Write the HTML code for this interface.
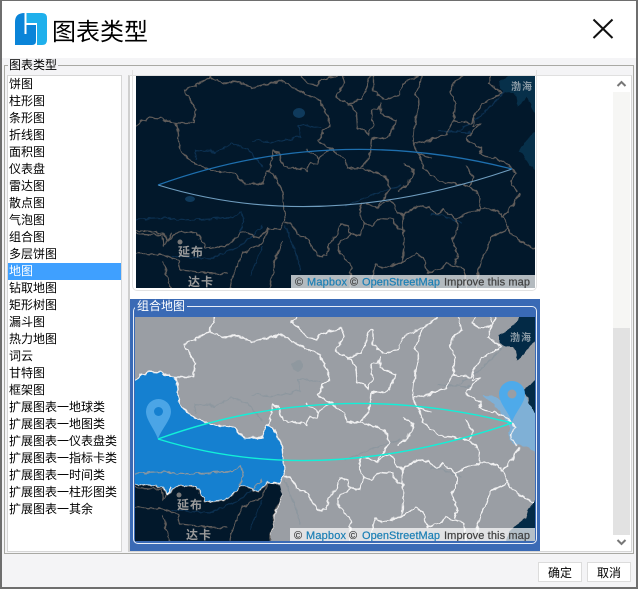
<!DOCTYPE html>
<html><head><meta charset="utf-8"><style>
*{box-sizing:border-box}
html,body{margin:0;padding:0;width:638px;height:589px;overflow:hidden;background:#f4f4f6}
body{position:relative;font-family:"WenQuanYi Zen Hei","Noto Sans CJK SC",sans-serif;font-size:12px;color:#000}
.a{position:absolute}
#frame{left:0;top:0;width:638px;height:589px;border:2px solid #6e6e6e;border-top-width:1px;z-index:9;pointer-events:none}
#head{left:0;top:0;width:638px;height:58px;background:#fff}
#title{left:52px;top:12px;font:24px/36px "Noto Sans CJK SC",sans-serif;color:#000}
#fs{left:4px;top:65px;width:630px;height:489px;border:1px solid #a9a9a4}
#lg{left:8px;top:58px;height:14px;line-height:14px;padding:0 1px;background:#f4f4f6;white-space:nowrap}
#list{left:7px;top:75px;width:115px;height:477px;background:#fff;border:1px solid #d6d6d6}
#list div{height:17px;line-height:15px;padding-left:1px;white-space:nowrap}
#list .s{background:#3fa0ff;color:#fff}
#panel{left:128px;top:75px;width:504px;height:477px;background:#fff;border:1px solid #d6d6d6;border-top-color:#e0e0e0;border-left:2px solid #cfcfcf}
#card1{left:132px;top:70px;width:405px;height:221px;border:1px solid #e2e2e2;border-top:0;border-radius:0 0 5px 5px}
#sel{left:130px;top:299px;width:410px;height:252px;background:#3a6ab5}
#selin{left:133px;top:306px;width:404px;height:238px;border:1px solid #e8eef8;border-radius:5px}
#sellg{left:135px;top:299px;height:14px;line-height:14px;padding:0 2px;color:#fff;background:#3a6ab5;white-space:nowrap}
#sb{left:613px;top:76px;width:17px;height:475px;background:#e2e2e2}
#sbt{left:0;top:16px;width:17px;height:236px;background:#f6f6f4}
#sbu,#sbd{left:0;width:17px;height:16px;background:#fff}
#sbu{top:0}#sbd{bottom:0}
.btn{top:562px;width:44px;height:20px;background:#fff;border:1px solid #dcdcdc;text-align:center;line-height:19px}
svg{position:absolute;left:0;top:0}
</style></head><body>
<div class="a" id="head"></div>
<div class="a" id="title">图表类型</div>
<div class="a" id="fs"></div>
<div class="a" id="lg">图表类型</div>
<div class="a" id="list">
<div>饼图</div><div>柱形图</div><div>条形图</div><div>折线图</div><div>面积图</div><div>仪表盘</div><div>雷达图</div><div>散点图</div><div>气泡图</div><div>组合图</div><div>多层饼图</div><div class="s">地图</div><div>钻取地图</div><div>矩形树图</div><div>漏斗图</div><div>热力地图</div><div>词云</div><div>甘特图</div><div>框架图</div><div>扩展图表一地球类</div><div>扩展图表一地图类</div><div>扩展图表一仪表盘类</div><div>扩展图表一指标卡类</div><div>扩展图表一时间类</div><div>扩展图表一柱形图类</div><div>扩展图表一其余</div>
</div>
<div class="a" id="panel"></div>
<div class="a" id="card1"></div>
<div class="a" id="sel"></div>
<div class="a" id="selin"></div>
<div class="a" id="sellg">组合地图</div>
<div class="a" id="sb"><div class="a" id="sbt"></div><div class="a" id="sbu"></div><div class="a" id="sbd"></div></div>
<div class="a btn" style="left:538px">确定</div>
<div class="a btn" style="left:587px">取消</div>

<svg width="638" height="589" viewBox="0 0 638 589">
<defs>
<filter id="rough" filterUnits="userSpaceOnUse" x="115" y="295" width="440" height="270" color-interpolation-filters="sRGB">
<feTurbulence type="fractalNoise" baseFrequency="0.16" numOctaves="2" seed="4" result="n"/>
<feDisplacementMap in="SourceGraphic" in2="n" scale="5" xChannelSelector="R" yChannelSelector="G"/>
</filter>
<g id="borders" fill="none" stroke-linejoin="round">
<path d="M125 381L135 380L140 376L148 372L160 373L175 377L193 377L195 363L184 344L210 332L214 318L216 310"/>
<path d="M175 377L177 385L178 395L180 405L190 415L205 423L220 426L235 428L240 434L245 438L256 438L263 437L267 425L273 428L282 445L283 460L285 475L280 483L268 482L258 492L243 485L225 500L205 502L197 487L178 485L168 495L162 487L140 485L125 487"/>
<path d="M210 332L225 337L240 336L252 342L262 339L283 335L298 345L320 355L325 365L330 380L323 385L318 395L330 403L345 413L347 423L360 422L369 412L371 392L378 393L390 390L395 375L380 367L380 357L378 363L370 365L372 380L368 388L357 382L356 367L348 358L335 350L344 337L342 329L320 333L317 340L307 337L298 327L291 322L297 318L300 310"/>
<path d="M348 358L362 353L368 332L373 330L373 345L383 353L398 350L405 335L423 328L437 318L442 310"/>
<path d="M423 328L415 348L419 358L415 372L413 398L428 395L438 390L445 389L453 375L455 358L450 345L455 335L462 330L458 318L458 310"/>
<path d="M453 375L470 377L473 370L483 357L502 347L488 338L490 328L495 320L498 310"/>
<path d="M473 370L472 380L480 378L465 393L473 398L482 402L480 408L503 415L512 423L515 428L510 436L517 445"/>
<path d="M413 398L418 408L423 422L432 430L440 436L453 437L470 440L477 448L480 463"/>
<path d="M360 422L370 425L385 430L390 443L382 453L377 462L370 458L362 457L358 468L365 478L372 480L380 472L392 473L398 483L402 483"/>
<path d="M268 427L272 405L278 407L283 420L293 422L307 425L310 417L317 418L318 413L305 403M318 413L330 403"/>
<path d="M285 477L290 477L298 490L305 490L317 510L327 510L328 498L338 487L340 478L347 480L350 488L338 498L338 505L350 518L350 528L350 545M350 488L358 490L365 478"/>
<path d="M377 462L390 453L395 462L402 470L405 467L417 460L428 462L437 468L443 463L455 473L470 465L480 463L492 463L503 470L508 483L492 490L483 510L477 527L476 545M508 483L512 490L520 495L533 502L545 506M503 470L513 458L520 447"/>
<path d="M402 470L403 493L402 517L415 508L423 513L428 527L438 523L447 518L463 522L465 528L466 545M455 473L458 482L452 493L457 510L455 518M402 517L395 518L382 523L375 518L372 530L370 545"/>
<path d="M403 418L412 422L413 430L405 440L397 445M465 420L473 430L470 440M432 412L418 408"/>
<path d="M472 323L475 318M472 323L480 328L492 326L490 318"/>
<path d="M282 495L274 515L272 530L268 548M268 482L262 497L242 507L232 531L228 548M125 507L162 509L178 514L180 524L208 527L228 528M163 514L168 537L172 548M125 487L162 489L163 501L172 487"/>
</g>
<g id="rivers" fill="none">
<path d="M195 414L195 404L215 406L232 397L248 404L263 421M252 394L272 396L285 394L300 391L298 379L322 382"/>
<path d="M125 474L162 472L192 474L232 472L242 466L243 474L240 487M172 510L210 513L240 500L262 480M285 480L295 505L300 525M262 500L250 530"/>
<path d="M455 386L480 370L505 345M437 385L470 387M430 468L445 470L462 478M345 460L375 448L400 440"/>
</g>
<clipPath id="cu"><rect x="136" y="76" width="399" height="212"/></clipPath>
<clipPath id="cl"><rect x="135" y="317" width="400" height="224"/></clipPath>
<clipPath id="land"><path clip-rule="evenodd" d="M115 300H555V560H115ZM115 487L140 485L162 487L168 495L178 485L197 487L205 502L225 500L243 485L258 492L268 482L280 485L282 495L274 515L272 530L268 560H115ZM533 300H555V340H535L527 352L517 361L515 350L500 343L498 335L510 330ZM555 372L535 380L523 390L535 415H555ZM555 495L535 500L528 510L525 518L510 530L500 560H555Z"/></clipPath>
</defs>

<!-- upper map -->
<g clip-path="url(#cu)">
<rect x="136" y="76" width="399" height="212" fill="#02182b"/>
<g transform="translate(0.5 -254)">
<g filter="url(#rough)">
<path d="M533 300H555V370H535L527 352L517 361L515 350L500 343L498 335L510 330ZM555 385L535 385L518 405L535 425H555Z" fill="#07304a"/>
<use href="#rivers" stroke="#0c3050" stroke-width="1.2"/>
<use href="#borders" stroke="#605c5a" stroke-width="1.35"/>
</g>
</g>
<ellipse cx="299" cy="113" rx="6" ry="5" fill="#0f3a5c"/>
<ellipse cx="190" cy="199" rx="5" ry="3" fill="#0f3a5c"/>
<path d="M158 185Q320 235 512 169" fill="none" stroke="#6f9dbf" stroke-width="1.1"/>
<path d="M158 185Q330 123 512 169" fill="none" stroke="#1e6fae" stroke-width="1.3"/>
<circle cx="180" cy="242" r="2.500" fill="#777"/>
<text x="178" y="256" font-family="'Noto Sans CJK SC',sans-serif" font-size="12" font-weight="700" fill="#9a9a9a" textLength="25">延布</text>
<text x="188" y="286" font-family="'Noto Sans CJK SC',sans-serif" font-size="12" font-weight="700" fill="#9a9a9a" textLength="25">达卡</text>
<text x="511" y="90" font-family="'Noto Sans CJK SC',sans-serif" font-size="10" font-weight="700" fill="#8a9aa5" textLength="21">渤海</text>
<rect x="291" y="275" width="244" height="13" fill="#fff" fill-opacity=".7"/>
<g font-family="'Liberation Sans',sans-serif" font-size="11" stroke-width=".2">
<text x="295" y="285.500" fill="#404040" stroke="#404040">©</text>
<text x="307" y="285.500" fill="#1a7fb5" stroke="#1a7fb5" textLength="40">Mapbox</text>
<text x="350" y="285.500" fill="#404040" stroke="#404040">©</text>
<text x="362" y="285.500" fill="#1a7fb5" stroke="#1a7fb5" textLength="78">OpenStreetMap</text>
<text x="444" y="285.500" fill="#404040" stroke="#404040" textLength="86">Improve this map</text>
</g>
</g>

<!-- lower map -->
<g clip-path="url(#cl)">
<rect x="135" y="317" width="400" height="225" fill="#02182b"/>
<g filter="url(#rough)">
<use href="#rivers" stroke="#0c3050" stroke-width="1.2"/>
<use href="#borders" stroke="#605c5a" stroke-width="1.35"/>
<path d="M533 300H555V340H535L527 352L517 361L515 350L500 343L498 335L510 330ZM555 372L535 380L523 390L535 415H555ZM555 495L535 500L528 510L525 518L510 530L500 560H555Z" fill="#032a46"/>
<g clip-path="url(#land)">
<rect x="115" y="300" width="440" height="260" fill="#9a9ea4"/>
<path d="M115 381L135 380L140 376L148 372L160 373L175 377L177 385L178 395L180 405L190 415L205 423L220 426L235 428L240 434L245 438L256 438L263 437L267 425L273 428L282 445L283 460L285 475L280 483L268 482L258 492L243 485L225 500L205 502L197 487L178 485L168 495L162 487L140 485L115 487Z" fill="#1580d0"/>
<path d="M483 396L490 395L500 400L510 396L525 397L535 412L555 412V456L535 452L522 445L512 443L507 433L510 428L503 415L492 403Z" fill="#7fb0d6"/>
<use href="#rivers" stroke="#8d979f" stroke-width="1.2"/>
<ellipse cx="298" cy="366" rx="6" ry="5" fill="#8f989f"/>
<use href="#borders" stroke="#f0f0f1" stroke-width="1.4"/>
</g>
</g>
<path d="M158 439Q320 489 512 423" fill="none" stroke="#12f0d8" stroke-width="1.4"/>
<path d="M158 439Q330 377 512 423" fill="none" stroke="#12f0d8" stroke-width="1.4"/>
<path d="M158 439C154 428 146 420 146 411.500A12.500 12.500 0 0 1 171 411.500C171 420 162 428 158 439Z" fill="#4ba5e6"/>
<circle cx="158.500" cy="411.500" r="4.500" fill="#1580d0"/>
<path d="M512 422C508 411 499 403 499 394A13 13 0 0 1 525 394C525 403 516 411 512 422Z" fill="#4eaaea"/>
<circle cx="512" cy="394" r="4.500" fill="#9a9ea4"/>
<circle cx="179" cy="495" r="2.500" fill="#777"/>
<text x="177" y="509" font-family="'Noto Sans CJK SC',sans-serif" font-size="12" font-weight="700" fill="#9a9a9a" textLength="25">延布</text>
<text x="186" y="539" font-family="'Noto Sans CJK SC',sans-serif" font-size="12" font-weight="700" fill="#9a9a9a" textLength="25">达卡</text>
<text x="510" y="341" font-family="'Noto Sans CJK SC',sans-serif" font-size="10" font-weight="700" fill="#8a9aa5" textLength="21">渤海</text>
<rect x="290" y="528" width="245" height="14" fill="#fff" fill-opacity=".7"/>
<g font-family="'Liberation Sans',sans-serif" font-size="11" stroke-width=".2">
<text x="294" y="539" fill="#404040" stroke="#404040">©</text>
<text x="306" y="539" fill="#1a7fb5" stroke="#1a7fb5" textLength="40">Mapbox</text>
<text x="349" y="539" fill="#404040" stroke="#404040">©</text>
<text x="362" y="539" fill="#1a7fb5" stroke="#1a7fb5" textLength="78">OpenStreetMap</text>
<text x="444" y="539" fill="#404040" stroke="#404040" textLength="86">Improve this map</text>
</g>
</g>

<!-- logo -->
<path d="M24.500 13Q15 13 15 22V45H32Q36 45 36 41V25H26.500V34H24.500Z" fill="#0a84d8"/>
<path d="M26.500 13H42Q47 13 47 18V40Q47 45 42 45H37V23H26.500Z" fill="#1fb0ec"/>
<!-- close -->
<path d="M593.500 19.500L612.500 38M612.500 19.500L593.500 38" stroke="#111" stroke-width="2" fill="none"/>
<!-- scroll arrows -->
<path d="M617.500 86L621.500 82L625.500 86" fill="none" stroke="#777" stroke-width="2"/>
<path d="M617.500 540L621.500 544L625.500 540" fill="none" stroke="#777" stroke-width="2"/>
</svg>
<div class="a" id="frame"></div>
</body></html>
